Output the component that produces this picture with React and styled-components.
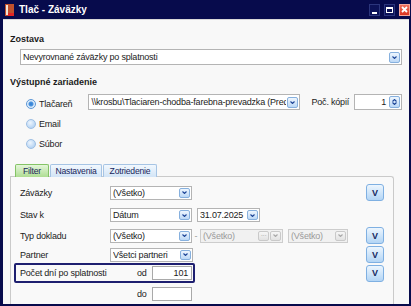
import React from "react"
import styled, { createGlobalStyle } from "styled-components"

const GlobalStyle = createGlobalStyle`
    body {
        margin: 0;
        font-family: "Liberation Sans", Arial, sans-serif;
        font-size: 9px;
        letter-spacing: -0.2px;
        color: #1b1b1b;
    }
`

// Frame
const Window = styled.div`
    width: 411px;
    height: 306px;
    background: #070b4c;
    display: flex;
    flex-direction: column;
    overflow: hidden;
`

const TitleBar = styled.div`
    height: 19px;
    display: flex;
    align-items: center;
    padding: 0 1px 0 5px;
    box-sizing: border-box;
`

const TitleText = styled.div`
    margin-left: 5px;
    color: #fff;
    font-weight: bold;
    font-size: 10px;
    letter-spacing: 0;
`

const WinButtons = styled.div`
    margin-left: auto;
    display: flex;
    gap: 4px;
    align-items: center;
`

const WinButton = styled.div`
    width: 11px;
    height: 12px;
    box-sizing: border-box;
    border: 1px solid ${props => (props.$close ? "#f4a59a" : "#2b357c")};
    background: ${props => (props.$close ? "linear-gradient(#f0705e, #d8321f)" : "#0c1258")};
    display: flex;
    align-items: center;
    justify-content: center;
`

const Body = styled.div`
    flex: 1;
    margin: 0 2px 2px 3px;
    background: #f8f8f8;
    border-top: 1px solid #d8d8d8;
    padding: 13px 7px 0 7px;
    display: flex;
    flex-direction: column;
    overflow: hidden;
`

const SectionTitle = styled.div`
    font-weight: bold;
    font-size: 9px;
    line-height: 12px;
    letter-spacing: 0;
    margin-top: ${props => props.$mt || 0}px;
`

// Inputs
const SelectBox = styled.div`
    width: ${props => props.$w}px;
    height: ${props => props.$h || 14}px;
    box-sizing: border-box;
    border: 1px solid ${props => (props.$disabled ? "#cdcdcd" : "#b4b4b4")};
    background: ${props => (props.$disabled ? "#f1f1f1" : "#fff")};
    color: ${props => (props.$disabled ? "#9a9a9a" : "#1b1b1b")};
    display: flex;
    align-items: center;
    gap: 1px;
    padding: 0 1px 0 2px;
    flex-shrink: 0;
`

const Value = styled.div`
    flex: 1;
    overflow: hidden;
    white-space: nowrap;
    text-align: ${props => (props.$right ? "right" : "left")};
    padding-right: ${props => (props.$right ? 2 : 0)}px;
`

const ArrowBtn = styled.div`
    width: 11px;
    height: ${props => props.$h || 10}px;
    box-sizing: border-box;
    border: 1px solid ${props => (props.$disabled ? "#c9c9c9" : "#86b0de")};
    border-radius: 2px;
    background: ${props =>
        props.$disabled ? "linear-gradient(#f6f6f6, #e2e2e2)" : "linear-gradient(#eef6fe, #bcd8f6)"};
    display: flex;
    flex-direction: column;
    align-items: center;
    justify-content: center;
    flex-shrink: 0;
    color: ${props => (props.$disabled ? "#a8a8a8" : "#1d4597")};
    font-size: 7px;
    letter-spacing: -0.5px;
`

const Chevron = ({ up }) => (
    <svg width="5" height="3" viewBox="0 0 5 3">
        <path
            d={up ? "M0.5 2.5 L2.5 0.5 L4.5 2.5" : "M0.5 0.5 L2.5 2.5 L4.5 0.5"}
            fill="none"
            stroke="currentColor"
            strokeWidth="1.1"
        />
    </svg>
)

function Select({ w, h, value, disabled, dots, right, arrowH }) {
    return (
        <SelectBox $w={w} $h={h} $disabled={disabled}>
            <Value $right={right}>{value}</Value>
            {dots && <ArrowBtn $disabled={disabled}>···</ArrowBtn>}
            <ArrowBtn $disabled={disabled} $h={arrowH}>
                <Chevron />
            </ArrowBtn>
        </SelectBox>
    )
}

const Field = styled.div`
    width: ${props => props.$w}px;
    height: 14px;
    box-sizing: border-box;
    border: 1px solid #a9a9a9;
    background: #fff;
    text-align: right;
    padding-right: 3px;
    line-height: 12px;
`

// Output device
const DeviceGrid = styled.div`
    display: flex;
    flex-direction: column;
    gap: 4px;
    margin-top: 6px;
`

const DeviceRow = styled.div`
    display: flex;
    align-items: center;
    height: 16px;
`

const RadioWrap = styled.div`
    width: 64px;
    margin-left: 16px;
    display: flex;
    align-items: center;
    gap: 3px;
    padding-top: 3px;
`

const Radio = styled.div`
    width: 10px;
    height: 10px;
    box-sizing: border-box;
    border-radius: 50%;
    border: 1px solid ${props => (props.$checked ? "#5d97d6" : "#9dbfe4")};
    background: ${props =>
        props.$checked
            ? "radial-gradient(circle, #2f7fd6 0, #4d94de 2px, #d7e8f9 3px, #eef5fd 5px)"
            : "radial-gradient(circle at 40% 35%, #eef6fe 0, #b9d5f3 5px)"};
`

const SmallLabel = styled.div`
    margin: ${props => props.$m || "0"};
    white-space: nowrap;
`

// Tabs & panel
const Tabs = styled.div`
    display: flex;
    margin: 14px 0 0 5px;
    align-items: flex-end;
`

const Tab = styled.div`
    width: ${props => props.$w}px;
    height: 13px;
    box-sizing: border-box;
    margin-right: ${props => props.$mr || 0}px;
    border: 1px solid ${props => (props.$active ? "#84c366" : "#a6c4e4")};
    border-bottom: none;
    border-radius: 2px 2px 0 0;
    background: ${props =>
        props.$active ? "linear-gradient(#e4f6da, #aedd93)" : "linear-gradient(#f2f8fe, #d2e4f6)"};
    color: #18255a;
    text-align: center;
    line-height: 12px;
    font-size: 8.6px;
    position: relative;
    z-index: 1;
    margin-bottom: -1px;
`

const Panel = styled.div`
    flex: 1;
    margin: 0 8px 0 0;
    border: 1px solid #cacaca;
    border-bottom: none;
    border-radius: 0 3px 0 0;
    background: #f9f9f9;
    padding: 7px 9px 0 9px;
    display: flex;
    flex-direction: column;
`

const Row = styled.div`
    height: ${props => props.$h}px;
    margin-top: ${props => props.$mt || 0}px;
    display: flex;
    align-items: center;
`

const Label = styled.div`
    width: ${props => props.$w}px;
    flex-shrink: 0;
    white-space: nowrap;
`

const Dash = styled.div`
    width: 8px;
    text-align: center;
    color: #9a9a9a;
`

const VButton = styled.div`
    margin-left: auto;
    width: 18px;
    height: 17px;
    box-sizing: border-box;
    border: 1px solid #7fb0e2;
    border-radius: 3px;
    background: linear-gradient(#edf6fe, #b3d5f5);
    color: #172a61;
    font-weight: bold;
    font-size: 9px;
    display: flex;
    align-items: center;
    justify-content: center;
`

const HighlightBox = styled.div`
    height: 20px;
    box-sizing: border-box;
    margin-left: -6px;
    border: 2px solid #1e1f70;
    border-radius: 2px;
    padding: 0 1px 0 4px;
    display: flex;
    align-items: center;
`

function App() {
    return (
        <Window>
            <GlobalStyle />
            <TitleBar>
                <svg width="9" height="12" viewBox="0 0 9 12">
                    <rect x="0" y="0" width="9" height="12" fill="#c0502c" />
                    <rect x="1" y="1" width="2" height="10" fill="#f3e2d6" />
                    <rect x="3" y="9" width="6" height="3" fill="#e02424" />
                </svg>
                <TitleText>Tlač - Záväzky</TitleText>
                <WinButtons>
                    <WinButton>
                        <svg width="5" height="8" viewBox="0 0 5 8">
                            <rect x="0" y="6" width="5" height="2" fill="#fff" />
                        </svg>
                    </WinButton>
                    <WinButton>
                        <svg width="7" height="6" viewBox="0 0 7 6">
                            <rect x="0.5" y="0.5" width="6" height="5" fill="none" stroke="#fff" />
                            <rect x="0" y="0" width="7" height="2" fill="#fff" />
                        </svg>
                    </WinButton>
                    <WinButton $close>
                        <svg width="7" height="7" viewBox="0 0 7 7">
                            <path d="M1 1 L6 6 M6 1 L1 6" stroke="#fff" strokeWidth="1.8" />
                        </svg>
                    </WinButton>
                </WinButtons>
            </TitleBar>

            <Body>
                <SectionTitle>Zostava</SectionTitle>
                <Row $h={16} $mt={4}>
                    <SmallLabel $m="0 0 0 10px" />
                    <Select w={382} h={16} arrowH={11} value="Nevyrovnané záväzky po splatnosti" />
                </Row>

                <SectionTitle $mt={11}>Výstupné zariadenie</SectionTitle>
                <DeviceGrid>
                    <DeviceRow>
                        <RadioWrap>
                            <Radio $checked />
                            <SmallLabel>Tlačareň</SmallLabel>
                        </RadioWrap>
                        <Select
                            w={212}
                            h={16}
                            arrowH={11}
                            value="\\krosbu\Tlaciaren-chodba-farebna-prevadzka (Pred"
                        />
                        <SmallLabel $m="0 5px 0 11px">Poč. kópií</SmallLabel>
                        <SelectBox $w={48} $h={16}>
                            <Value $right>1</Value>
                            <ArrowBtn $h={12}>
                                <Chevron up />
                                <Chevron />
                            </ArrowBtn>
                        </SelectBox>
                    </DeviceRow>
                    <DeviceRow>
                        <RadioWrap>
                            <Radio />
                            <SmallLabel>Email</SmallLabel>
                        </RadioWrap>
                    </DeviceRow>
                    <DeviceRow>
                        <RadioWrap>
                            <Radio />
                            <SmallLabel>Súbor</SmallLabel>
                        </RadioWrap>
                    </DeviceRow>
                </DeviceGrid>

                <Tabs>
                    <Tab $active $w={34} $mr={1}>Filter</Tab>
                    <Tab $w={52} $mr={1}>Nastavenia</Tab>
                    <Tab $w={54}>Zotriedenie</Tab>
                </Tabs>
                <Panel>
                    <Row $h={17}>
                        <Label $w={90}>Záväzky</Label>
                        <Select w={82} value="(Všetko)" />
                        <VButton>V</VButton>
                    </Row>
                    <Row $h={16} $mt={6}>
                        <Label $w={90}>Stav k</Label>
                        <Select w={82} value="Dátum" />
                        <SmallLabel $m="0 0 0 5px" />
                        <Select w={63} value="31.07.2025" />
                    </Row>
                    <Row $h={17} $mt={4}>
                        <Label $w={90}>Typ dokladu</Label>
                        <Select w={82} value="(Všetko)" />
                        <Dash>-</Dash>
                        <Select w={83} value="(Všetko)" disabled dots />
                        <SmallLabel $m="0 0 0 5px" />
                        <Select w={60} value="(Všetko)" disabled />
                        <VButton>V</VButton>
                    </Row>
                    <Row $h={17} $mt={2}>
                        <Label $w={90}>Partner</Label>
                        <Select w={83} value="Všetci partneri" />
                        <VButton>V</VButton>
                    </Row>
                    <Row $h={20}>
                        <HighlightBox>
                            <Label $w={117}>Počet dní po splatnosti</Label>
                            <Label $w={15}>od</Label>
                            <Field $w={40}>101</Field>
                        </HighlightBox>
                        <VButton>V</VButton>
                    </Row>
                    <Row $h={17} $mt={2}>
                        <Label $w={117} />
                        <Label $w={15}>do</Label>
                        <Field $w={40} />
                    </Row>
                </Panel>
            </Body>
        </Window>
    )
}

export default App
